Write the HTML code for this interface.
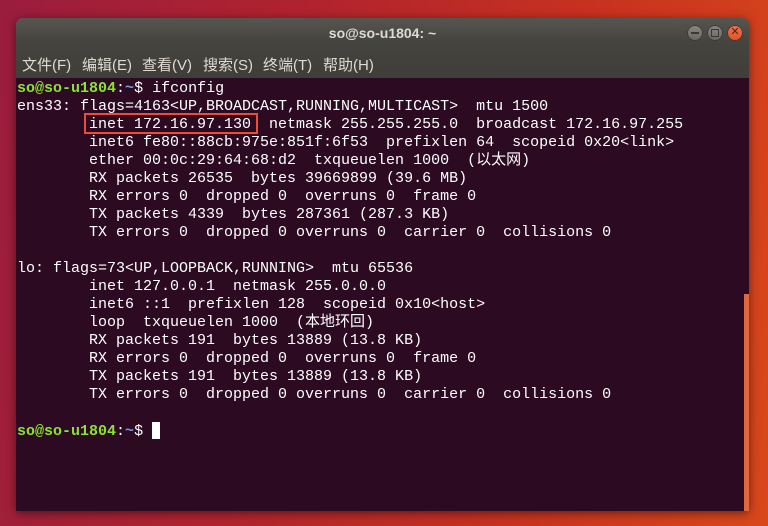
<!DOCTYPE html>
<html><head><meta charset="utf-8"><style>
html,body{margin:0;padding:0}
body{width:768px;height:526px;overflow:hidden;position:relative;
background:linear-gradient(100deg,#9a1d3e 0%,#b0232e 35%,#c8321f 70%,#d9481b 100%);}
.win{position:absolute;left:16px;top:18px;width:733px;height:493px;border-radius:7px 7px 0 0;overflow:hidden;box-shadow:0 2px 10px rgba(0,0,0,.5)}
.title{position:absolute;left:0;top:0;width:100%;height:60px;background:linear-gradient(#57554f,#45443f 40%,#3f3e3a)}
.ttl{position:absolute;left:0;right:0;top:7px;text-align:center;color:#dfdbd2;font:bold 14px "Liberation Sans","DejaVu Sans",sans-serif}
.menu span{position:absolute;top:36px;color:#dfdbd2;font:15px "Liberation Sans","Noto Sans CJK SC",sans-serif;white-space:nowrap}
.btn{position:absolute;top:7px;width:16px;height:16px;border-radius:50%;background:linear-gradient(#8a8883,#67655f);box-shadow:inset 0 0 0 1px #3a3935}
.term{position:absolute;left:0;top:60px;width:100%;height:433px;background:#2c0a22}
pre{margin:0;position:absolute;left:1px;top:2px;font:15px/18px "Liberation Mono","Noto Sans CJK SC",monospace;color:#fff;white-space:pre}
.g{color:#8ae234;font-weight:bold}.b{color:#729fcf;font-weight:bold}
.box{position:absolute;left:68px;top:35px;width:170px;height:17px;border:2px solid #f04a3a}
.cur{display:inline-block;width:8px;height:17px;background:#fff;vertical-align:-4px}
.sb{position:absolute;left:728px;top:216px;width:5px;height:217px;background:#e0683c}
</style></head><body>
<div class="win">
 <div class="title">
  <div class="ttl">so@so-u1804: ~</div>
  <div class="menu"><span style="left:6px">文件(F)</span><span style="left:66px">编辑(E)</span><span style="left:126px">查看(V)</span><span style="left:187px">搜索(S)</span><span style="left:247px">终端(T)</span><span style="left:307px">帮助(H)</span></div>
  <div class="btn" style="left:671px"><div style="position:absolute;left:4px;top:7px;width:8px;height:1.5px;background:#3a3935"></div></div>
  <div class="btn" style="left:691px"><div style="position:absolute;left:4px;top:4px;width:6px;height:6px;border:1.5px solid #3a3935"></div></div>
  <div class="btn" style="left:711px;background:linear-gradient(#f0744a,#e0522a)"><div style="position:absolute;left:0;top:0;width:16px;height:16px;line-height:16px;text-align:center;color:#5a2010;font:bold 11px 'DejaVu Sans',sans-serif">✕</div></div>
 </div>
 <div class="term">
<pre><span class="g">so@so-u1804</span>:<span class="b">~</span>$ ifconfig
ens33: flags=4163&lt;UP,BROADCAST,RUNNING,MULTICAST&gt;  mtu 1500
        inet 172.16.97.130  netmask 255.255.255.0  broadcast 172.16.97.255
        inet6 fe80::88cb:975e:851f:6f53  prefixlen 64  scopeid 0x20&lt;link&gt;
        ether 00:0c:29:64:68:d2  txqueuelen 1000  (以太网)
        RX packets 26535  bytes 39669899 (39.6 MB)
        RX errors 0  dropped 0  overruns 0  frame 0
        TX packets 4339  bytes 287361 (287.3 KB)
        TX errors 0  dropped 0 overruns 0  carrier 0  collisions 0

lo: flags=73&lt;UP,LOOPBACK,RUNNING&gt;  mtu 65536
        inet 127.0.0.1  netmask 255.0.0.0
        inet6 ::1  prefixlen 128  scopeid 0x10&lt;host&gt;
        loop  txqueuelen 1000  (本地环回)
        RX packets 191  bytes 13889 (13.8 KB)
        RX errors 0  dropped 0  overruns 0  frame 0
        TX packets 191  bytes 13889 (13.8 KB)
        TX errors 0  dropped 0 overruns 0  carrier 0  collisions 0

<span class="g">so@so-u1804</span>:<span class="b">~</span>$ <span class="cur"></span></pre>
  <div class="box"></div>
  <div class="sb"></div>
 </div>
</div>
</body></html>
